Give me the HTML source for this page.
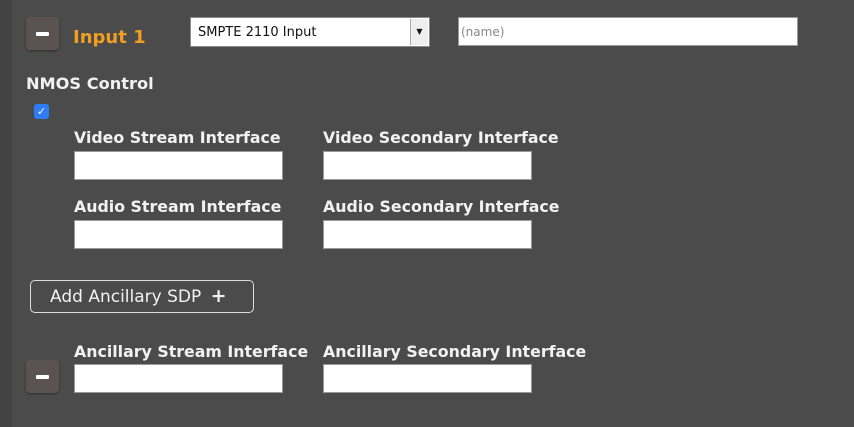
<!DOCTYPE html>
<html><head><style>
body{margin:0;width:854px;height:427px;background:#4b4b4b;font-family:"DejaVu Sans",sans-serif;position:relative;overflow:hidden}
.strip{position:absolute;left:0;top:0;width:12px;height:427px;background:#424242}
.a{position:absolute}
.minus{position:absolute;width:33px;height:33px;background:#5b5352;border-radius:4px;box-shadow:0 1px 2px rgba(0,0,0,.4)}
.minus:after{content:"";position:absolute;left:10px;top:15px;width:13px;height:4px;background:#fff;border-radius:1px}
.lbl{position:absolute;color:#f2f2f2;font-weight:bold;font-size:15.8px;white-space:nowrap}
.in{position:absolute;background:#fff;border:1px solid #999;box-sizing:border-box;width:209px;height:29px}
</style></head><body>
<div class="strip"></div>
<div class="minus" style="left:26px;top:17px"></div>
<div class="a" style="left:73px;top:27px;color:#f0a020;font-weight:bold;font-size:18px">Input 1</div>
<div class="a" style="left:190px;top:17px;width:240px;height:30px;background:#fff;border:1px solid #888;box-sizing:border-box;font-size:13px;line-height:30px;padding-left:7px;color:#111">SMPTE 2110 Input
<div class="a" style="right:1px;top:1px;width:17px;height:26px;background:#eee;border-left:1px solid #aaa;font-size:8px;line-height:26px;text-align:center">▼</div></div>
<div class="a" style="left:458px;top:17px;width:340px;height:29px;background:#fff;border:1px solid #999;box-sizing:border-box;font-size:12px;line-height:29px;padding-left:2px;color:#888">(name)</div>
<div class="lbl" style="left:26px;top:74px;font-size:16.2px">NMOS Control</div>
<div class="a" style="left:34px;top:104px;width:15px;height:15px;background:#2f7cf6;border-radius:3px;color:#fff;font-size:11px;line-height:15px;text-align:center;font-weight:bold">✓</div>
<div class="lbl" style="left:74px;top:128px">Video Stream Interface</div>
<div class="lbl" style="left:323px;top:128px">Video Secondary Interface</div>
<div class="in" style="left:74px;top:151px"></div>
<div class="in" style="left:323px;top:151px"></div>
<div class="lbl" style="left:74px;top:197px">Audio Stream Interface</div>
<div class="lbl" style="left:323px;top:197px">Audio Secondary Interface</div>
<div class="in" style="left:74px;top:220px"></div>
<div class="in" style="left:323px;top:220px"></div>
<div class="a" style="left:30px;top:280px;width:224px;height:33px;border:1px solid #ddd;border-radius:5px;box-sizing:border-box;color:#f2f2f2;font-size:17px;line-height:31px;padding-left:19px;white-space:nowrap">Add Ancillary SDP <b style="margin-left:4px;font-size:19px">+</b></div>
<div class="lbl" style="left:74px;top:342px">Ancillary Stream Interface</div>
<div class="lbl" style="left:323px;top:342px">Ancillary Secondary Interface</div>
<div class="minus" style="left:26px;top:360px"></div>
<div class="in" style="left:74px;top:364px"></div>
<div class="in" style="left:323px;top:364px"></div>
</body></html>
